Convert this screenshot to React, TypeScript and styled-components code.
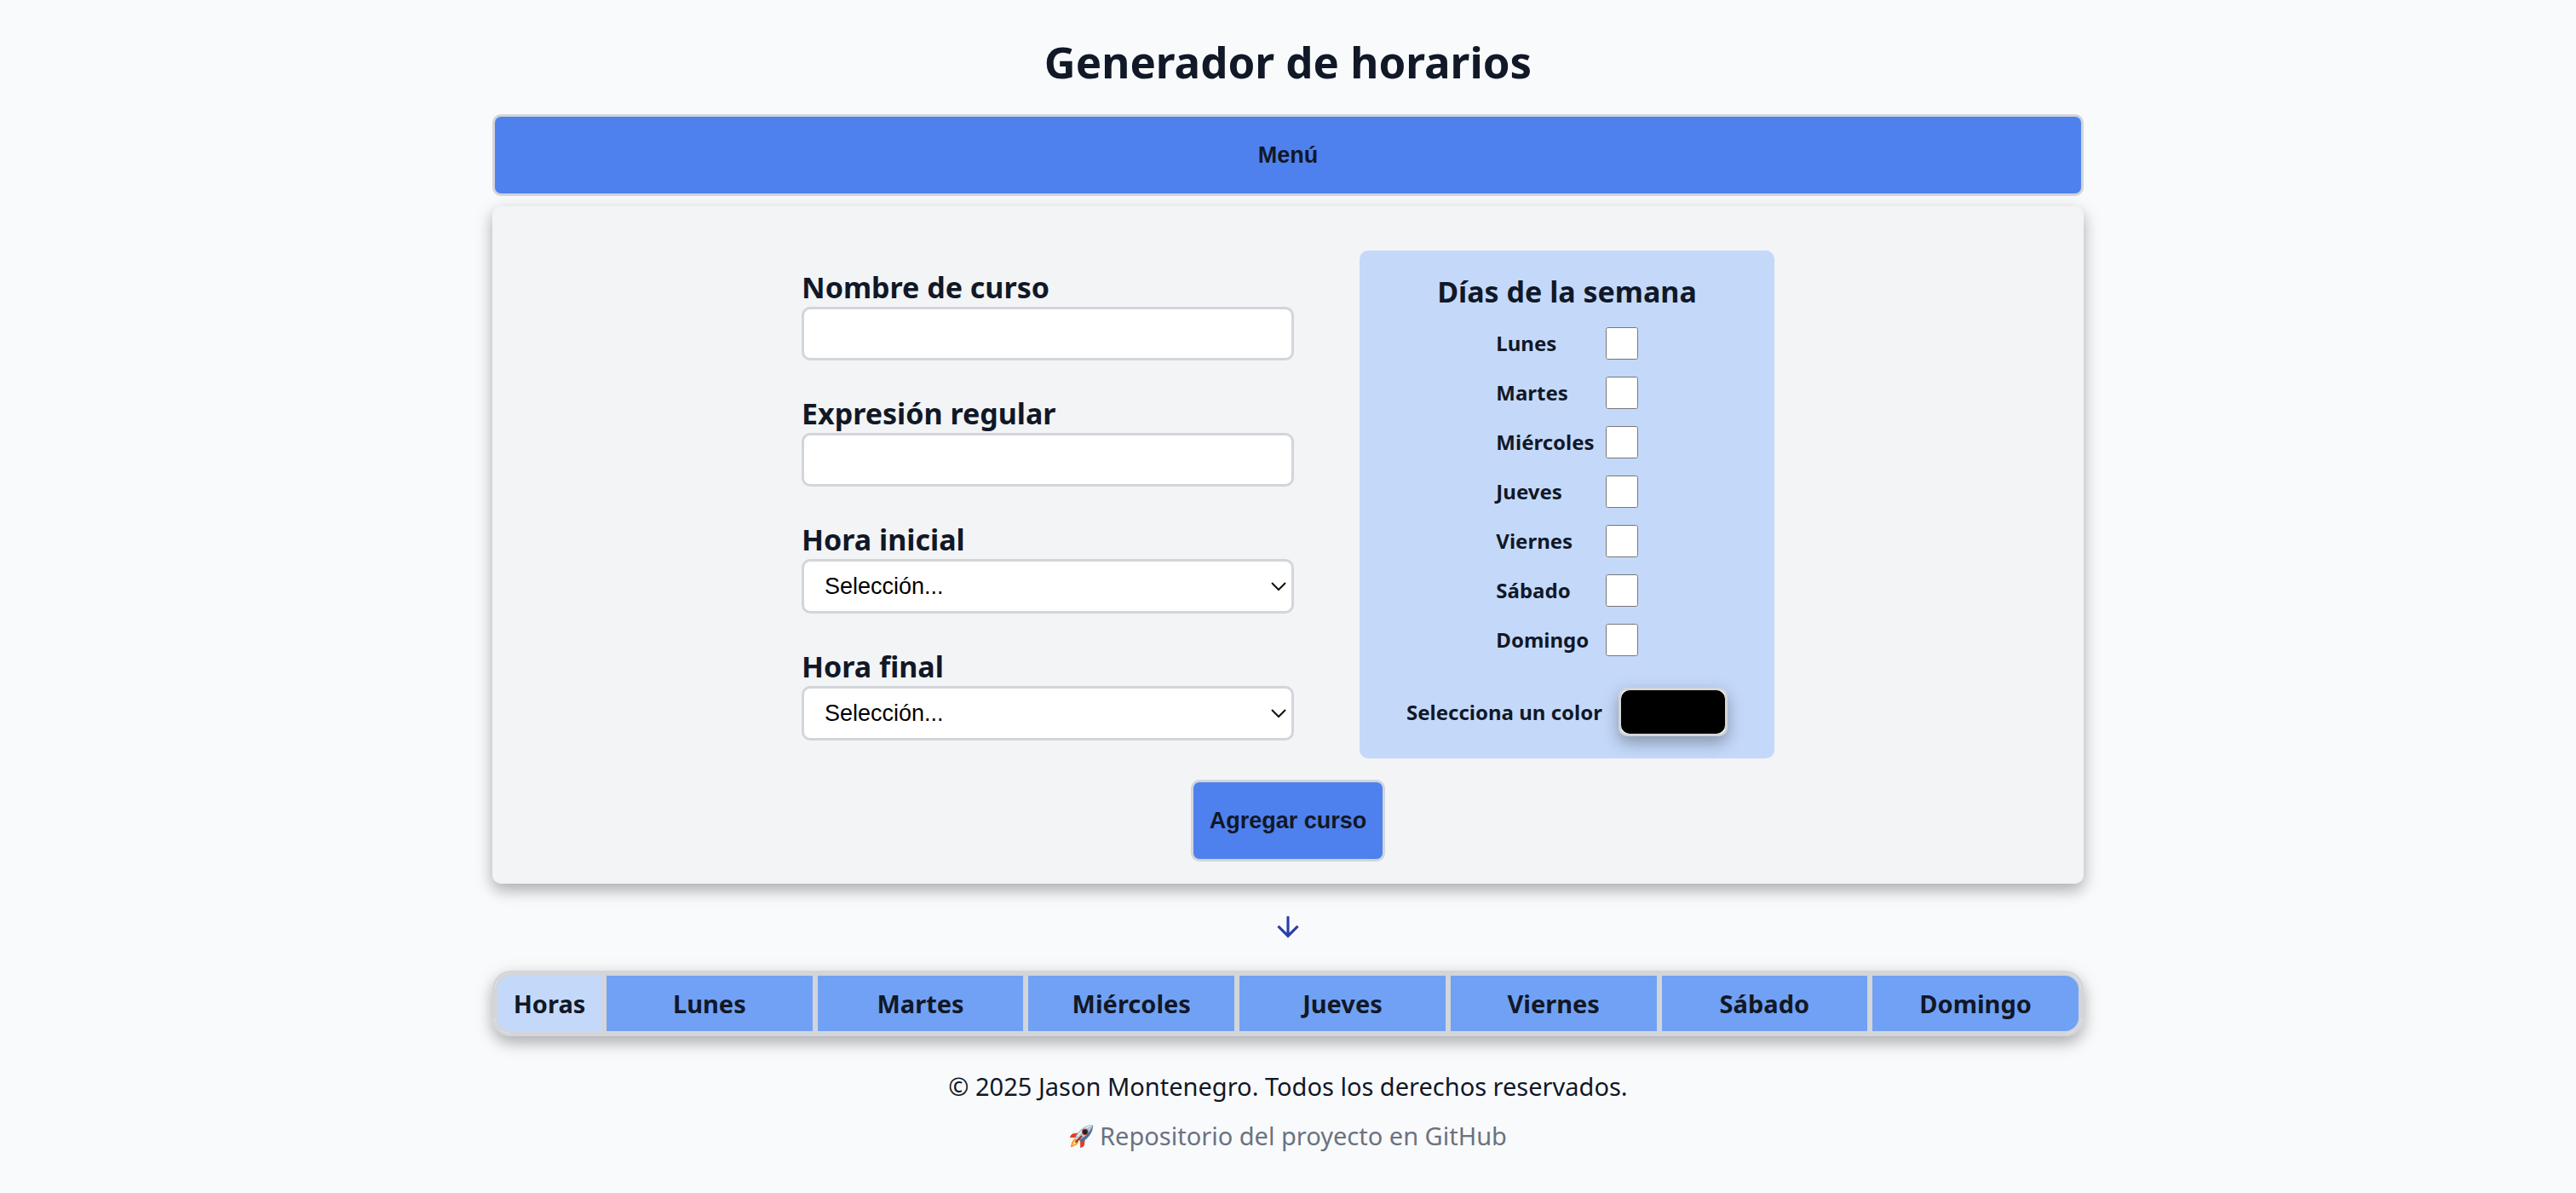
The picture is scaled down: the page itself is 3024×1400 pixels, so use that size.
import React from "react";
import styled, { createGlobalStyle } from "styled-components";

const colors = {
  page: "#f9fafc",
  card: "#f3f4f6",
  line: "#d2d5da",
  ink: "#111827",
  muted: "#6b7280",
  primary: "#4f81ee",
  soft: "#c4d9fa",
  head: "#71a1f4",
  arrow: "#2a41a8",
};

const shadow = "0 8px 16px rgba(0, 0, 0, 0.2), 0 6px 24px rgba(0, 0, 0, 0.14)";

const GlobalStyle = createGlobalStyle`
  *, *::before, *::after { box-sizing: border-box; }
  body {
    margin: 0;
    background: ${colors.page};
    color: ${colors.ink};
    font-family: "Noto Sans", sans-serif;
    font-size: 29px;
  }
`;

const Page = styled.div`
  max-width: 1868px;
  margin: 0 auto;
  padding: 37px 0 48px;
  display: flex;
  flex-direction: column;
`;

const Title = styled.h1`
  margin: 0 0 26px;
  font-size: 51px;
  line-height: 71px;
  text-align: center;
`;

const Button = styled.button`
  height: 96px;
  padding: 0 19px;
  border: 3px solid ${colors.line};
  border-radius: 10px;
  background: ${colors.primary};
  color: ${colors.ink};
  font: bold 27px "Liberation Sans", Arial, sans-serif;
  cursor: pointer;
`;

const Form = styled.form`
  margin-top: 12px;
  padding: 52px 26px 26px;
  border-radius: 10px;
  background: ${colors.card};
  box-shadow: ${shadow};
  display: flex;
  flex-direction: column;
  align-items: center;
  gap: 25px;
`;

const Columns = styled.div`
  display: flex;
  flex-wrap: wrap;
  justify-content: center;
  align-items: flex-start;
  gap: 26px 77px;
`;

const Fields = styled.div`
  width: 578px;
  padding-top: 20px;
  display: flex;
  flex-direction: column;
  gap: 39px;
`;

const Field = styled.div`
  display: flex;
  flex-direction: column;
`;

const FieldLabel = styled.label`
  font-size: 34px;
  line-height: 46px;
  font-weight: bold;
`;

const TextInput = styled.input`
  width: 100%;
  height: 63px;
  padding: 0 24px;
  border: 3px solid ${colors.line};
  border-radius: 10px;
  background: #fff;
  color: #000;
  font: 27px "Liberation Sans", Arial, sans-serif;
`;

const SelectBox = styled.div`
  position: relative;
`;

const Select = styled.select`
  display: block;
  appearance: none;
  width: 100%;
  height: 64px;
  padding: 0 24px;
  border: 3px solid ${colors.line};
  border-radius: 10px;
  background: #fff;
  color: #000;
  font: 27px "Liberation Sans", Arial, sans-serif;
`;

const Chevron = styled.svg`
  position: absolute;
  right: 9px;
  top: 26px;
  width: 18px;
  height: 12px;
  fill: none;
  stroke: #111;
  stroke-width: 2;
  pointer-events: none;
`;

const Panel = styled.div`
  width: 487px;
  padding: 25px 25px 26px;
  border-radius: 10px;
  background: ${colors.soft};
  display: flex;
  flex-direction: column;
  align-items: center;
`;

const Days = styled.fieldset`
  margin: 0;
  padding: 0;
  border: 0;
  display: flex;
  flex-direction: column;
  align-items: center;
`;

const Legend = styled.legend`
  padding: 0 0 9px;
  font-size: 34px;
  line-height: 46px;
  font-weight: bold;
  text-align: center;
`;

const DayList = styled.div`
  display: flex;
  flex-direction: column;
`;

const DayRow = styled.div`
  height: 58px;
  display: flex;
  align-items: center;
  justify-content: space-between;
  gap: 13px;
`;

const SmallLabel = styled.label`
  font-size: 24px;
  line-height: 34px;
  font-weight: bold;
`;

const Checkbox = styled.input`
  width: 38px;
  height: 38px;
  margin: 0;
`;

const ColorRow = styled.div`
  margin-top: 27px;
  display: flex;
  align-items: center;
  gap: 19px;
`;

const ColorInput = styled.input`
  appearance: none;
  width: 128px;
  height: 57px;
  padding: 0;
  border: 3px solid ${colors.line};
  border-radius: 10px;
  background: #fff;
  box-shadow: ${shadow};
  overflow: hidden;

  &::-webkit-color-swatch-wrapper {
    padding: 0;
  }

  &::-webkit-color-swatch {
    border: 0;
    border-radius: 10px;
  }
`;

const ArrowDown = styled.svg`
  width: 38px;
  height: 38px;
  margin: 32px auto;
  fill: ${colors.arrow};
`;

const Schedule = styled.table`
  width: 100%;
  table-layout: fixed;
  border: 3px solid ${colors.line};
  border-collapse: separate;
  border-spacing: 0;
  border-radius: 22px;
  overflow: hidden;
  box-shadow: ${shadow};
`;

const HeadCell = styled.th<{ $hours?: boolean }>`
  width: ${(p) => (p.$hours ? "128px" : "auto")};
  height: 71px;
  padding: 0;
  border: 3px solid ${colors.line};
  background: ${(p) => (p.$hours ? colors.soft : colors.head)};
  font-size: 29px;

  &:first-child {
    border-radius: 19px 0 0 19px;
  }

  &:last-child {
    border-radius: 0 19px 19px 0;
  }
`;

const Footer = styled.footer`
  margin-top: 39px;
  display: flex;
  flex-direction: column;
  align-items: center;
  gap: 18px;
  line-height: 40px;
`;

const Copyright = styled.p`
  margin: 0;
`;

const RepoLink = styled.a`
  display: flex;
  align-items: center;
  gap: 6px;
  color: ${colors.muted};
  text-decoration: none;
`;

const Rocket = styled.svg`
  width: 30px;
  height: 30px;
`;

const days = ["Lunes", "Martes", "Miércoles", "Jueves", "Viernes", "Sábado", "Domingo"];

function TimeSelect({ id, label }: { id: string; label: string }) {
  return (
    <Field>
      <FieldLabel htmlFor={id}>{label}</FieldLabel>
      <SelectBox>
        <Select id={id} defaultValue="">
          <option value="">Selección...</option>
        </Select>
        <Chevron viewBox="0 0 18 12" aria-hidden="true">
          <path d="M1 2l8 8 8-8" />
        </Chevron>
      </SelectBox>
    </Field>
  );
}

function TextField({ id, label }: { id: string; label: string }) {
  return (
    <Field>
      <FieldLabel htmlFor={id}>{label}</FieldLabel>
      <TextInput id={id} type="text" />
    </Field>
  );
}

export default function App() {
  return (
    <>
      <GlobalStyle />
      <Page>
        <Title>Generador de horarios</Title>
        <Button type="button">Menú</Button>
        <Form onSubmit={(e) => e.preventDefault()}>
          <Columns>
            <Fields>
              <TextField id="curso" label="Nombre de curso" />
              <TextField id="regex" label="Expresión regular" />
              <TimeSelect id="inicio" label="Hora inicial" />
              <TimeSelect id="fin" label="Hora final" />
            </Fields>
            <Panel>
              <Days>
                <Legend>Días de la semana</Legend>
                <DayList>
                  {days.map((day) => (
                    <DayRow key={day}>
                      <SmallLabel htmlFor={day}>{day}</SmallLabel>
                      <Checkbox id={day} type="checkbox" />
                    </DayRow>
                  ))}
                </DayList>
              </Days>
              <ColorRow>
                <SmallLabel htmlFor="color">Selecciona un color</SmallLabel>
                <ColorInput id="color" type="color" defaultValue="#000000" />
              </ColorRow>
            </Panel>
          </Columns>
          <Button type="submit">Agregar curso</Button>
        </Form>
        <ArrowDown viewBox="0 0 24 24" aria-hidden="true">
          <path d="M20 12l-1.41-1.41L13 16.17V4h-2v12.17l-5.58-5.59L4 12l8 8 8-8z" />
        </ArrowDown>
        <Schedule>
          <thead>
            <tr>
              <HeadCell $hours>Horas</HeadCell>
              {days.map((day) => (
                <HeadCell key={day}>{day}</HeadCell>
              ))}
            </tr>
          </thead>
        </Schedule>
        <Footer>
          <Copyright>© 2025 Jason Montenegro. Todos los derechos reservados.</Copyright>
          <RepoLink href="#">
            <Rocket viewBox="0 0 32 32" aria-hidden="true">
              <path d="M13 12L5 13Q2 14 1 18L9 18zM20 20l-1 8q-1 2-5 3l0-8z" fill="#df3f22" />
              <path d="M8 19c-3 1-5 5-6 11 5-1 9-3 10-7z" fill="#f5912a" />
              <path d="M8 21c-2 1-3 4-4 7 3-1 5-2 6-5z" fill="#ffe27a" />
              <path d="M30 2c-9 0-16 5-22 15l7 7c10-5 15-13 15-22z" fill="#4d7396" />
              <path d="M30 2c-9 0-16 5-22 15l4 4c9-4 15-11 18-19z" fill="#b4c6d6" />
              <path d="M30 2c-8 1-14 6-20 14l1 1c6-8 12-12 19-15z" fill="#eef3f7" />
              <circle cx="20" cy="11" r="4" fill="#c9382a" />
              <circle cx="20" cy="11" r="3" fill="#1c222b" />
              <path d="M16 16l-8 8" stroke="#a82a1b" strokeWidth="2" />
            </Rocket>
            Repositorio del proyecto en GitHub
          </RepoLink>
        </Footer>
      </Page>
    </>
  );
}
